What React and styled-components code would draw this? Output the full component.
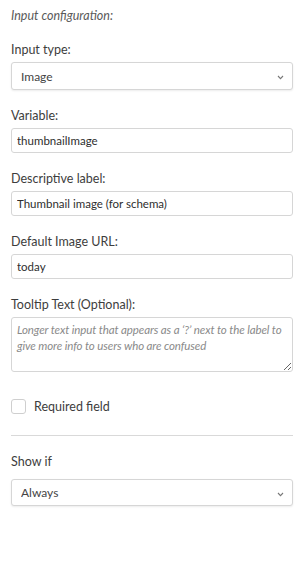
import React from "react";
import styled, { createGlobalStyle } from "styled-components";

const Global = createGlobalStyle`
  html, body {
    margin: 0;
    padding: 0;
    background: #ffffff;
  }
  body {
    font-family: Lato, "Open Sans", sans-serif;
    color: #3d3d3d;
  }
  * { box-sizing: border-box; }
`;

function Chevron() {
  return (
    <St.Chevron width="7" height="5" viewBox="0 0 7 5">
      <path d="M1 1 L3.5 3.6 L6 1" fill="none" stroke="#777" strokeWidth="1.1" />
    </St.Chevron>
  );
}

function SelectField({ label, value, options, tall }) {
  return (
    <St.Field>
      <St.Label>{label}</St.Label>
      <St.SelectWrap>
        <St.Select defaultValue={value} $tall={tall}>
          {options.map((o) => (
            <option key={o}>{o}</option>
          ))}
        </St.Select>
        <Chevron />
      </St.SelectWrap>
    </St.Field>
  );
}

function TextField({ label, value }) {
  return (
    <St.Field>
      <St.Label>{label}</St.Label>
      <St.Input defaultValue={value} />
    </St.Field>
  );
}

function App() {
  return (
    <St.Panel>
      <Global />
      <St.Title>Input configuration:</St.Title>
      <SelectField label="Input type:" value="Image" options={["Image", "Text", "Date"]} tall />
      <TextField label="Variable:" value="thumbnailImage" />
      <TextField label="Descriptive label:" value="Thumbnail image (for schema)" />
      <TextField label="Default Image URL:" value="today" />
      <St.Field>
        <St.Label>Tooltip Text (Optional):</St.Label>
        <St.TextArea placeholder="Longer text input that appears as a ‘?’ next to the label to give more info to users who are confused" />
      </St.Field>
      <St.CheckRow>
        <St.Box type="checkbox" />
        <span>Required field</span>
      </St.CheckRow>
      <St.Divider />
      <St.ShowIf>
        <SelectField label="Show if" value="Always" options={["Always", "Never"]} />
      </St.ShowIf>
    </St.Panel>
  );
}

export default App;

const St = {
  Panel: styled.div`
    width: 307px;
    min-height: 563px;
    padding: 8px 14px 0 11px;
    font-size: 12px;
  `,
  Title: styled.div`
    font-style: italic;
    font-size: 12.5px;
    color: #5a5a5a;
    line-height: 16px;
    margin-bottom: 18px;
  `,
  Field: styled.div`
    margin-bottom: 18px;
  `,
  Label: styled.label`
    display: block;
    line-height: 16px;
    margin-bottom: 4px;
    color: #3d3d3d;
    font-size: 12.5px;
  `,
  SelectWrap: styled.div`
    position: relative;
  `,
  Select: styled.select`
    appearance: none;
    width: 100%;
    height: ${(p) => (p.$tall ? "28px" : "27px")};
    padding: 0 20px 0 9px;
    border: 1px solid #d6d6d6;
    border-radius: 3px;
    background: #fff;
    box-shadow: 0 1px 2px rgba(0, 0, 0, 0.08);
    font-family: inherit;
    font-size: 12px;
    color: #444;
    outline: none;
  `,
  Chevron: styled.svg`
    position: absolute;
    right: 9px;
    top: 50%;
    margin-top: -1px;
    pointer-events: none;
  `,
  Input: styled.input`
    display: block;
    width: 100%;
    height: 25px;
    padding: 0 5px;
    border: 1px solid #d6d6d6;
    border-radius: 3px;
    background: #fff;
    font-family: inherit;
    font-size: 11.5px;
    color: #2e2e2e;
    outline: none;
  `,
  TextArea: styled.textarea`
    display: block;
    width: 100%;
    height: 55px;
    padding: 4px 5px;
    border: 1px solid #d6d6d6;
    border-radius: 3px;
    font-family: inherit;
    font-size: 11.5px;
    line-height: 16px;
    letter-spacing: -0.1px;
    outline: none;
    &::placeholder {
      color: #8a8a8a;
      font-style: italic;
    }
  `,
  CheckRow: styled.label`
    display: flex;
    align-items: center;
    gap: 8px;
    margin-top: 27px;
    font-size: 12.5px;
    color: #3d3d3d;
  `,
  Box: styled.input`
    appearance: none;
    margin: 0;
    width: 15px;
    height: 15px;
    border: 1px solid #cfcfcf;
    border-radius: 3px;
    background: #fff;
  `,
  Divider: styled.hr`
    border: none;
    border-top: 1px solid #d9d9d9;
    margin: 21px 0 18px;
  `,
  ShowIf: styled.div`
    label {
      margin-bottom: 9px;
    }
  `,
};
